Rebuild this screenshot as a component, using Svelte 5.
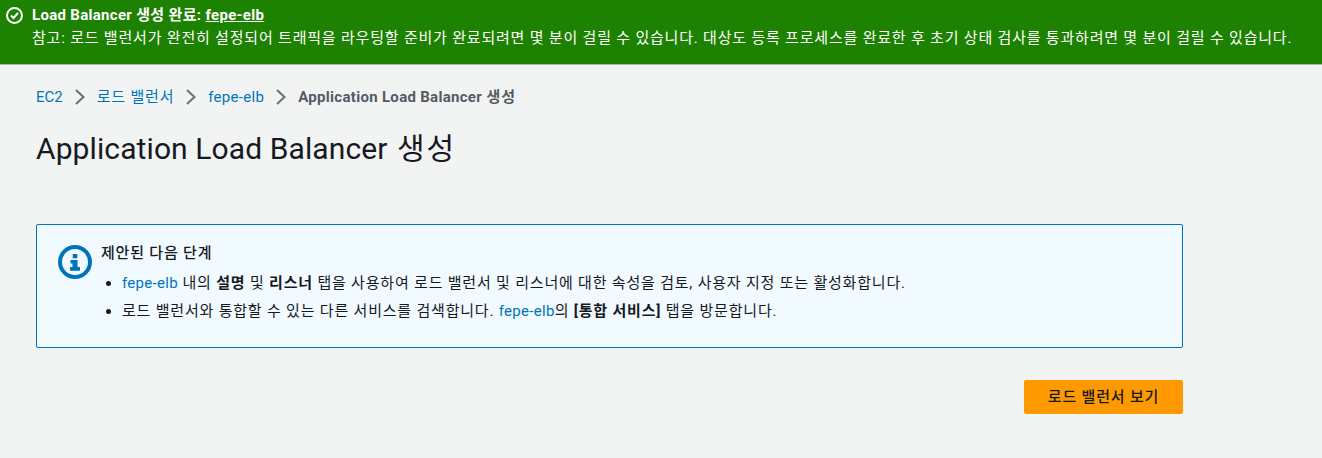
<script>
  const name = 'fepe-elb';
</script>

{#snippet chevron()}
  <svg class="sep" width="10" height="16" viewBox="0 0 10 16" fill="none" stroke="#687078" stroke-width="2"><path d="M1 1l7.5 7L1 15"/></svg>
{/snippet}

<div class="page">
  <header class="flash">
    <svg class="check" width="17" height="17" viewBox="0 0 17 17" fill="none" stroke="#fff" stroke-width="2">
      <circle cx="8.5" cy="8.5" r="7.5"/>
      <path d="M5 8.5l2.5 2.5L12 6"/>
    </svg>
    <div class="flash-body">
      <div class="flash-title"><span class="lat">Load Balancer</span> 생성 완료: <a class="lat" href="#a">{name}</a></div>
      <div class="flash-text">참고: 로드 밸런서가 완전히 설정되어 트래픽을 라우팅할 준비가 완료되려면 몇 분이 걸릴 수 있습니다. 대상도 등록 프로세스를 완료한 후 초기 상태 검사를 통과하려면 몇 분이 걸릴 수 있습니다.</div>
    </div>
  </header>

  <main class="content">
    <nav class="crumbs">
      <a class="root" href="#a">EC2</a>
      {@render chevron()}
      <a href="#a">로드 밸런서</a>
      {@render chevron()}
      <a class="lat" href="#a">{name}</a>
      {@render chevron()}
      <span class="current"><span class="lat">Application Load Balancer</span> 생성</span>
    </nav>

    <h1><span class="lat">Application Load Balancer</span> 생성</h1>

    <section class="info">
      <svg class="info-icon" width="34" height="34" viewBox="0 0 34 34">
        <circle cx="17" cy="17" r="15" fill="none" stroke="#0073bb" stroke-width="4"/>
        <rect x="14.7" y="9" width="4.6" height="4.3" fill="#0073bb"/>
        <path d="M12.5 15h7v7h2.5v3.7H12v-3.7h2.5v-3.5h-2z" fill="#0073bb"/>
      </svg>
      <div class="info-body">
        <h2>제안된 다음 단계</h2>
        <ul>
          <li><a class="lat" href="#a">{name}</a> 내의 <b>설명</b> 및 <b>리스너</b> 탭을 사용하여 로드 밸런서 및 리스너에 대한 속성을 검토, 사용자 지정 또는 활성화합니다.</li>
          <li>로드 밸런서와 통합할 수 있는 다른 서비스를 검색합니다. <a class="lat" href="#a">{name}</a>의 <b>[통합 서비스]</b> 탭을 방문합니다.</li>
        </ul>
      </div>
    </section>

    <div class="actions">
      <button type="button">로드 밸런서 보기</button>
    </div>
  </main>
</div>

<style>
  :global(body) {
    margin: 0;
    background: #f2f3f3;
  }
  .page {
    height: 458px;
    overflow: hidden;
    background: #f2f3f3;
    color: #16191f;
    font-family: Roboto, "Noto Sans CJK KR", sans-serif;
    font-size: 15px;
    letter-spacing: 0.8px;
    line-height: 22px;
  }
  .lat {
    letter-spacing: 0.3px;
  }
  a {
    color: #0073bb;
    text-decoration: none;
  }
  .root {
    letter-spacing: 0;
  }
  .flash {
    box-sizing: border-box;
    height: 65px;
    display: flex;
    gap: 9px;
    padding: 4px 6px 0;
    background: #1d8102;
    color: #fff;
    border-bottom: 1px solid #aab7b8;
  }
  .check {
    margin-top: 3px;
    flex: none;
  }
  .flash-title {
    font-weight: 700;
    letter-spacing: 0.35px;
  }
  .flash-title a {
    color: #fff;
    text-decoration: underline;
  }
  .flash-text {
    margin-top: 1px;
    white-space: nowrap;
  }
  .content {
    width: 1183px;
    padding: 21px 0 0 36px;
    box-sizing: border-box;
  }
  .crumbs {
    display: flex;
    align-items: center;
    gap: 12px;
    height: 22px;
    white-space: nowrap;
  }
  .current {
    color: #545b64;
    font-weight: 700;
  }
  h1 {
    margin: 19px 0 0;
    font-size: 30px;
    line-height: 44px;
    font-weight: 400;
    letter-spacing: 2px;
  }
  h1 .lat {
    letter-spacing: 0.1px;
  }
  .info {
    margin-top: 53px;
    height: 124px;
    box-sizing: border-box;
    display: flex;
    gap: 9px;
    padding: 17px 20px 17px 21px;
    background: #f1faff;
    border: 1px solid #0073bb;
    border-radius: 2px;
  }
  .info-icon {
    flex: none;
    margin-top: 3px;
  }
  h2 {
    margin: 0;
    font-size: 15px;
    line-height: 22px;
    font-weight: 500;
  }
  ul {
    margin: 8px 0 0;
    padding: 0 0 0 21px;
  }
  li {
    margin-bottom: 6px;
    line-height: 22px;
  }
  b {
    font-weight: 700;
  }
  .actions {
    display: flex;
    justify-content: flex-end;
    margin-top: 32px;
  }
  button {
    width: 159px;
    height: 34px;
    padding: 0;
    border: 0;
    border-radius: 2px;
    background: #ff9900;
    color: #16191f;
    letter-spacing: 0.8px;
    font: 500 15px/22px Roboto, "Noto Sans CJK KR", sans-serif;
  }
</style>
